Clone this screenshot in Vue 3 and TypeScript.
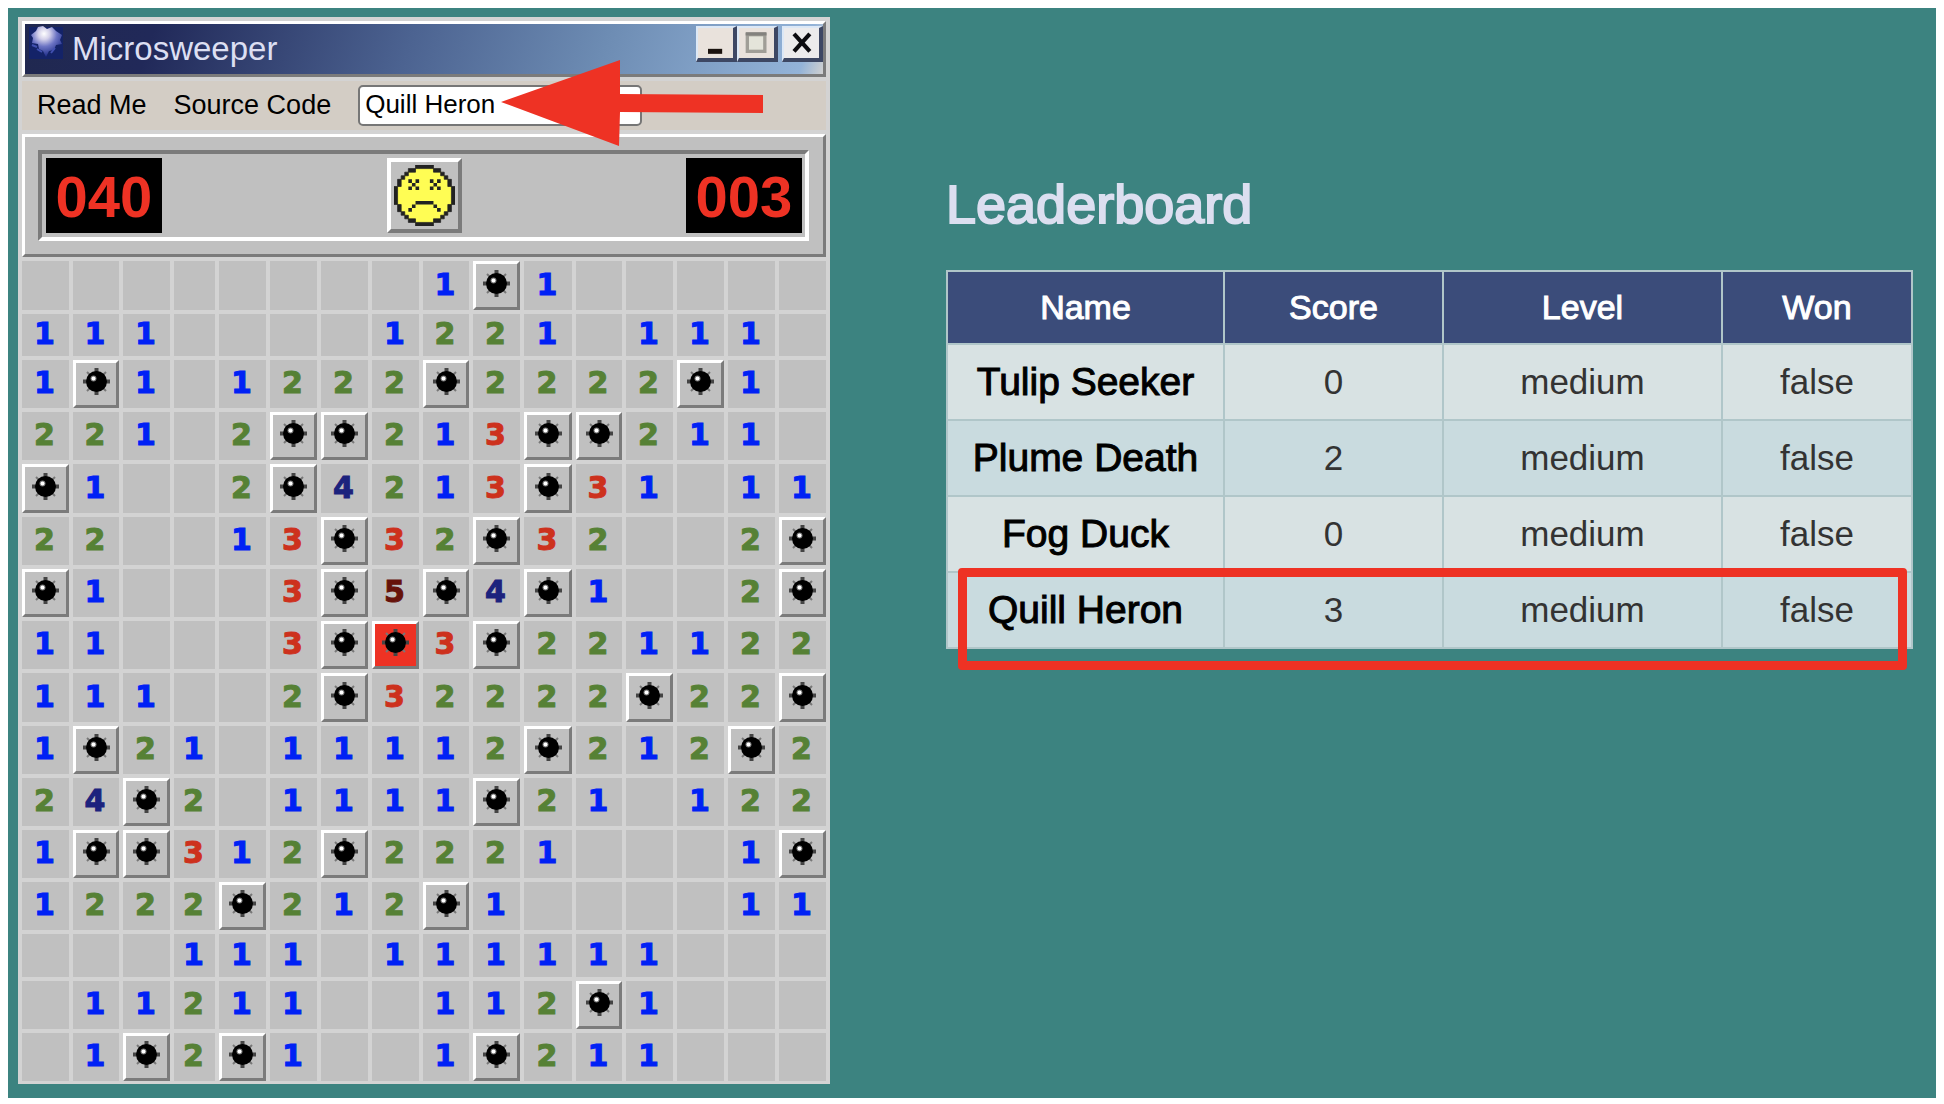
<script setup lang="ts">
import { ref } from 'vue'

interface Entry {
  name: string
  score: number
  level: string
  won: boolean
}

// Board legend: "." open, "*" mine, "X" the mine that ended the game, digits are neighbour counts.
const board: string[] = [
  '........1*1.....',
  '111....1221.111.',
  '1*1.1222*2222*1.',
  '221.2**213**211.',
  '*1..2*4213*31.11',
  '22..13*32*32..2*',
  '*1...3*5*4*1..2*',
  '11...3*X3*221122',
  '111..2*32222*22*',
  '1*21.11112*212*2',
  '24*2.1111*21.122',
  '1**312*2221...1*',
  '1222*212*1....11',
  '...111.111111...',
  '.11211..112*1...',
  '.1*2*1..1*211...',
]

const cells = board.flatMap((row, y) => [...row].map((value, x) => ({ value, key: `${y}-${x}` })))

const player = ref('Quill Heron')
const minesLeft = '040'
const seconds = '003'

const entries: Entry[] = [
  { name: 'Tulip Seeker', score: 0, level: 'medium', won: false },
  { name: 'Plume Death', score: 2, level: 'medium', won: false },
  { name: 'Fog Duck', score: 0, level: 'medium', won: false },
  { name: 'Quill Heron', score: 3, level: 'medium', won: false },
]
</script>

<template>
  <main class="page">
    <div class="desktop">
      <section class="window">
        <header class="titlebar">
          <svg class="app-icon" viewBox="0 0 36 36" aria-hidden="true">
            <defs>
              <radialGradient id="orb" cx="42%" cy="25%" r="75%">
                <stop offset="0" stop-color="#ffffff" />
                <stop offset="0.25" stop-color="#d3d0ea" />
                <stop offset="0.55" stop-color="#6c74c4" />
                <stop offset="1" stop-color="#1b2a86" />
              </radialGradient>
            </defs>
            <rect x="1" y="3" width="34" height="32" fill="#142368" />
            <path
              d="M15 2l4 3 5-2 4 4 6 4-2 5 2 4-6 1-2 5-5 1-3 6-3-6-4-2-1-5-6-1 1-5-2-3 5-4 2-4z"
              fill="url(#orb)"
            />
            <path d="M9 25l5 3M27 24l-4 5M4 21l5 2" stroke="#4150b0" stroke-width="2" />
          </svg>
          <h1>Microsweeper</h1>
          <div class="window-buttons">
            <button type="button" aria-label="Minimize">
              <svg viewBox="0 0 40 36"><rect x="11" y="25" width="17" height="6" fill="#1a120e" /></svg>
            </button>
            <button type="button" aria-label="Maximize">
              <svg viewBox="0 0 40 36">
                <rect x="9" y="8" width="21" height="20" fill="#e4e4da" stroke="#a09e97" stroke-width="4" />
                <rect x="7" y="5" width="25" height="4" fill="#83827e" />
              </svg>
            </button>
            <button type="button" class="close" aria-label="Close">
              <svg viewBox="0 0 40 36">
                <path d="M11 7L30 28M30 7L11 28" stroke="#0c0c10" stroke-width="5" />
              </svg>
            </button>
          </div>
        </header>

        <nav class="menubar">
          <a href="#readme">Read Me</a>
          <a href="#source">Source Code</a>
          <input v-model="player" type="text" aria-label="Player name" />
          <svg class="arrow" viewBox="0 0 262 86" aria-hidden="true">
            <path d="M0 42L119 0V34L262 35V53L119 52L118 86Z" fill="#ee3224" />
          </svg>
        </nav>

        <div class="status">
          <div class="status-inner">
            <output class="led" aria-label="Mines left">{{ minesLeft }}</output>
            <button type="button" class="face" aria-label="New game">
              <svg viewBox="0 0 17 17">
                <path
                  fill="#fffd54"
                  stroke="#fffd54"
                  stroke-width="0.4"
                  d="M6 1h5v1h2v1h1v1h1v2h1v5h-1v2h-1v1h-1v1h-2v1H6v-1H4v-1H3v-1H2v-2H1V6h1V4h1V3h1V2h2z"
                />
                <path
                  fill="#222"
                  stroke="#222"
                  stroke-width="0.2"
                  d="M6 0h5v1H6zM4 1h2v1H4zM11 1h2v1h-2zM3 2h1v1H3zM13 2h1v1h-1zM2 3h1v1H2zM14 3h1v1h-1zM1 4h1v2H1zM15 4h1v2h-1zM0 6h1v5H0zM16 6h1v5h-1zM1 11h1v2H1zM15 11h1v2h-1zM2 13h1v1H2zM14 13h1v1h-1zM3 14h1v1H3zM13 14h1v1h-1zM4 15h2v1H4zM11 15h2v1h-2zM6 16h5v1H6z"
                />
                <path
                  fill="#222"
                  d="M4 4h1v1H4zM6 4h1v1H6zM5 5h1v1H5zM4 6h1v1H4zM6 6h1v1H6zM10 4h1v1h-1zM12 4h1v1h-1zM11 5h1v1h-1zM10 6h1v1h-1zM12 6h1v1h-1zM6 10h5v1H6zM5 11h1v1H5zM11 11h1v1h-1zM4 12h1v1H4zM12 12h1v1h-1z"
                />
              </svg>
            </button>
            <output class="led" aria-label="Seconds">{{ seconds }}</output>
          </div>
        </div>

        <div class="board">
          <template v-for="cell in cells" :key="cell.key">
            <button
              v-if="cell.value === '*' || cell.value === 'X'"
              type="button"
              class="mine"
              :class="{ hit: cell.value === 'X' }"
              aria-label="Mine"
            >
              <svg viewBox="0 0 27 27">
                <path d="M13.5 0v27M0 13.5h27" stroke="#444" stroke-width="4" />
                <path d="M4 4l19 19M23 4L4 23" stroke="#777" stroke-width="2" />
                <circle cx="13.5" cy="13.5" r="10.5" fill="#000" />
                <circle cx="10.5" cy="10.5" r="3" fill="#777" />
                <circle cx="10.5" cy="10.5" r="2" fill="#fff" />
              </svg>
            </button>
            <div v-else class="cell" :class="'n' + cell.value">{{ cell.value === '.' ? '' : cell.value }}</div>
          </template>
        </div>
      </section>

      <section class="leaderboard">
        <h2>Leaderboard</h2>
        <div class="table-wrap">
          <table>
            <colgroup>
              <col class="c-name" />
              <col class="c-score" />
              <col class="c-level" />
              <col class="c-won" />
            </colgroup>
            <thead>
              <tr>
                <th scope="col">Name</th>
                <th scope="col">Score</th>
                <th scope="col">Level</th>
                <th scope="col">Won</th>
              </tr>
            </thead>
            <tbody>
              <tr v-for="entry in entries" :key="entry.name">
                <td class="name">{{ entry.name }}</td>
                <td>{{ entry.score }}</td>
                <td>{{ entry.level }}</td>
                <td>{{ entry.won }}</td>
              </tr>
            </tbody>
          </table>
          <div class="highlight" aria-hidden="true"></div>
        </div>
      </section>
    </div>
  </main>
</template>

<style>
body {
  margin: 0;
  background: #fff;
}
</style>

<style scoped>
* {
  box-sizing: border-box;
}

.page {
  display: flex;
  min-height: 100vh;
  padding: 8px 10px 6px 8px;
  font-family: 'Liberation Sans', Arial, sans-serif;
}

.desktop {
  display: flex;
  flex: 1;
  align-items: flex-start;
  gap: 116px;
  padding: 9px 23px 13px 10px;
  background: #3c8380;
}

.window {
  display: flex;
  flex: 0 0 812px;
  flex-direction: column;
  gap: 4px;
  padding: 4px 4px 3px;
  background: #d3d3d3;
}

.titlebar {
  display: flex;
  align-items: center;
  height: 56px;
  padding: 0 0 0 3px;
  border: 3px solid;
  border-color: #fff #7b7b7b #7b7b7b #fff;
  background: linear-gradient(108deg, #20284f 0%, #212959 16%, #4c6391 48%, #6d8cb3 72%, #93b3d8 97%, #d0d0d0 100%);
}

.app-icon {
  align-self: flex-start;
  width: 36px;
  height: 36px;
}

h1 {
  flex: 1;
  margin: 0;
  padding-left: 8px;
  color: #dcdff2;
  font-size: 33px;
  font-weight: 400;
  line-height: 40px;
}

.window-buttons {
  display: flex;
  align-self: flex-start;
  padding-top: 2px;
}

.window-buttons button {
  width: 41px;
  height: 36px;
  padding: 0;
  border: solid;
  border-width: 2px 4px 4px 2px;
  border-color: #dce8f6 #3d4763 #3d4763 #dce8f6;
  background: #e9e2dc;
}

.window-buttons .close {
  margin-left: 4px;
  background: #ecebec;
}

.window-buttons svg {
  display: block;
  width: 100%;
  height: 100%;
}

.menubar {
  position: relative;
  display: flex;
  align-items: center;
  height: 49px;
  padding: 0 15px;
  background: #d3cdc5;
}

.menubar a {
  margin-right: 27px;
  padding-bottom: 2px;
  color: #000;
  font-size: 27px;
  line-height: 32px;
  text-decoration: none;
}

.menubar input {
  width: 284px;
  height: 41px;
  padding: 0 5px 2px;
  border: 2px solid #767676;
  border-radius: 5px;
  background: #fff;
  color: #000;
  font: 26px 'Liberation Sans', Arial, sans-serif;
}

.arrow {
  position: absolute;
  top: -21px;
  left: 479px;
  width: 262px;
  height: 86px;
}

.status {
  height: 123px;
  padding: 13px 14px 13px 13px;
  border: 3px solid;
  border-color: #fff #7b7b7b #7b7b7b #fff;
  background: #c0c0c0;
}

.status-inner {
  display: flex;
  justify-content: space-between;
  padding: 4px 3px 4px 4px;
  border: 4px solid;
  border-color: #7b7b7b #fff #fff #7b7b7b;
}

.led {
  width: 116px;
  height: 75px;
  background: #000;
  color: #ee3224;
  font-size: 58px;
  font-weight: 700;
  line-height: 78px;
  text-align: center;
}

.face {
  width: 75px;
  height: 75px;
  padding: 3px;
  border: 4px solid;
  border-color: #fff #7b7b7b #7b7b7b #fff;
  background: #c0c0c0;
}

.face svg {
  display: block;
  width: 61px;
  height: 61px;
}

.board {
  display: grid;
  grid-template-columns: 47fr 46fr 47fr 41fr repeat(4, 47fr) 46fr 47fr 48fr 46fr repeat(4, 47fr);
  grid-template-rows: 49px 42px 48px 48px 49px repeat(3, 48px) 49px repeat(4, 48px) 43px 48px 48px;
  gap: 4px;
}

.cell {
  display: grid;
  place-items: center;
  padding: 0 2px 2px 0;
  background: #c0c0c0;
  font-family: 'DejaVu Sans', sans-serif;
  font-size: 30px;
  font-weight: 700;
  line-height: 36px;
  -webkit-text-stroke: 1px currentColor;
}

.n1 {
  color: #0021f5;
}

.n2 {
  color: #568135;
}

.n3 {
  color: #cd311d;
}

.n4 {
  color: #1c227d;
}

.n5 {
  color: #66120a;
}

.mine {
  display: flex;
  align-items: center;
  justify-content: center;
  padding: 0 0 5px;
  border: 3px solid;
  border-color: #fff #7b7b7b #7b7b7b #fff;
  background: #c0c0c0;
}

.mine.hit {
  background: #ee3224;
}

.mine svg {
  width: 27px;
  height: 27px;
}

.leaderboard {
  flex: 1;
  padding-top: 157px;
}

h2 {
  margin: 0 0 36px;
  color: #dcdff0;
  font-size: 54px;
  font-weight: 400;
  line-height: 60px;
  -webkit-text-stroke: 2px #dcdff0;
}

.table-wrap {
  position: relative;
}

table {
  width: 100%;
  border-collapse: collapse;
  table-layout: fixed;
}

.c-name {
  width: 277px;
}

.c-score {
  width: 219px;
}

.c-level {
  width: 279px;
}

.c-won {
  width: 190px;
}

th,
td {
  padding: 0;
  border: 2px solid #b0c6c9;
  text-align: center;
}

th {
  height: 73px;
  background: #3b4c7a;
  color: #fff;
  font-size: 34px;
  font-weight: 400;
  -webkit-text-stroke: 1px #fff;
}

td {
  height: 76px;
  background: #d8e2e3;
  color: #333;
  font-size: 35px;
}

tr:nth-child(even) td {
  background: #c9dbdf;
}

td.name {
  color: #000;
  font-size: 39px;
  -webkit-text-stroke: 1px #000;
}

/* Frame drawn around the newest entry, in the last row. */
.highlight {
  position: absolute;
  right: 6px;
  bottom: -21px;
  left: 12px;
  height: 102px;
  border: 9px solid #ee3224;
  border-radius: 4px;
}
</style>
